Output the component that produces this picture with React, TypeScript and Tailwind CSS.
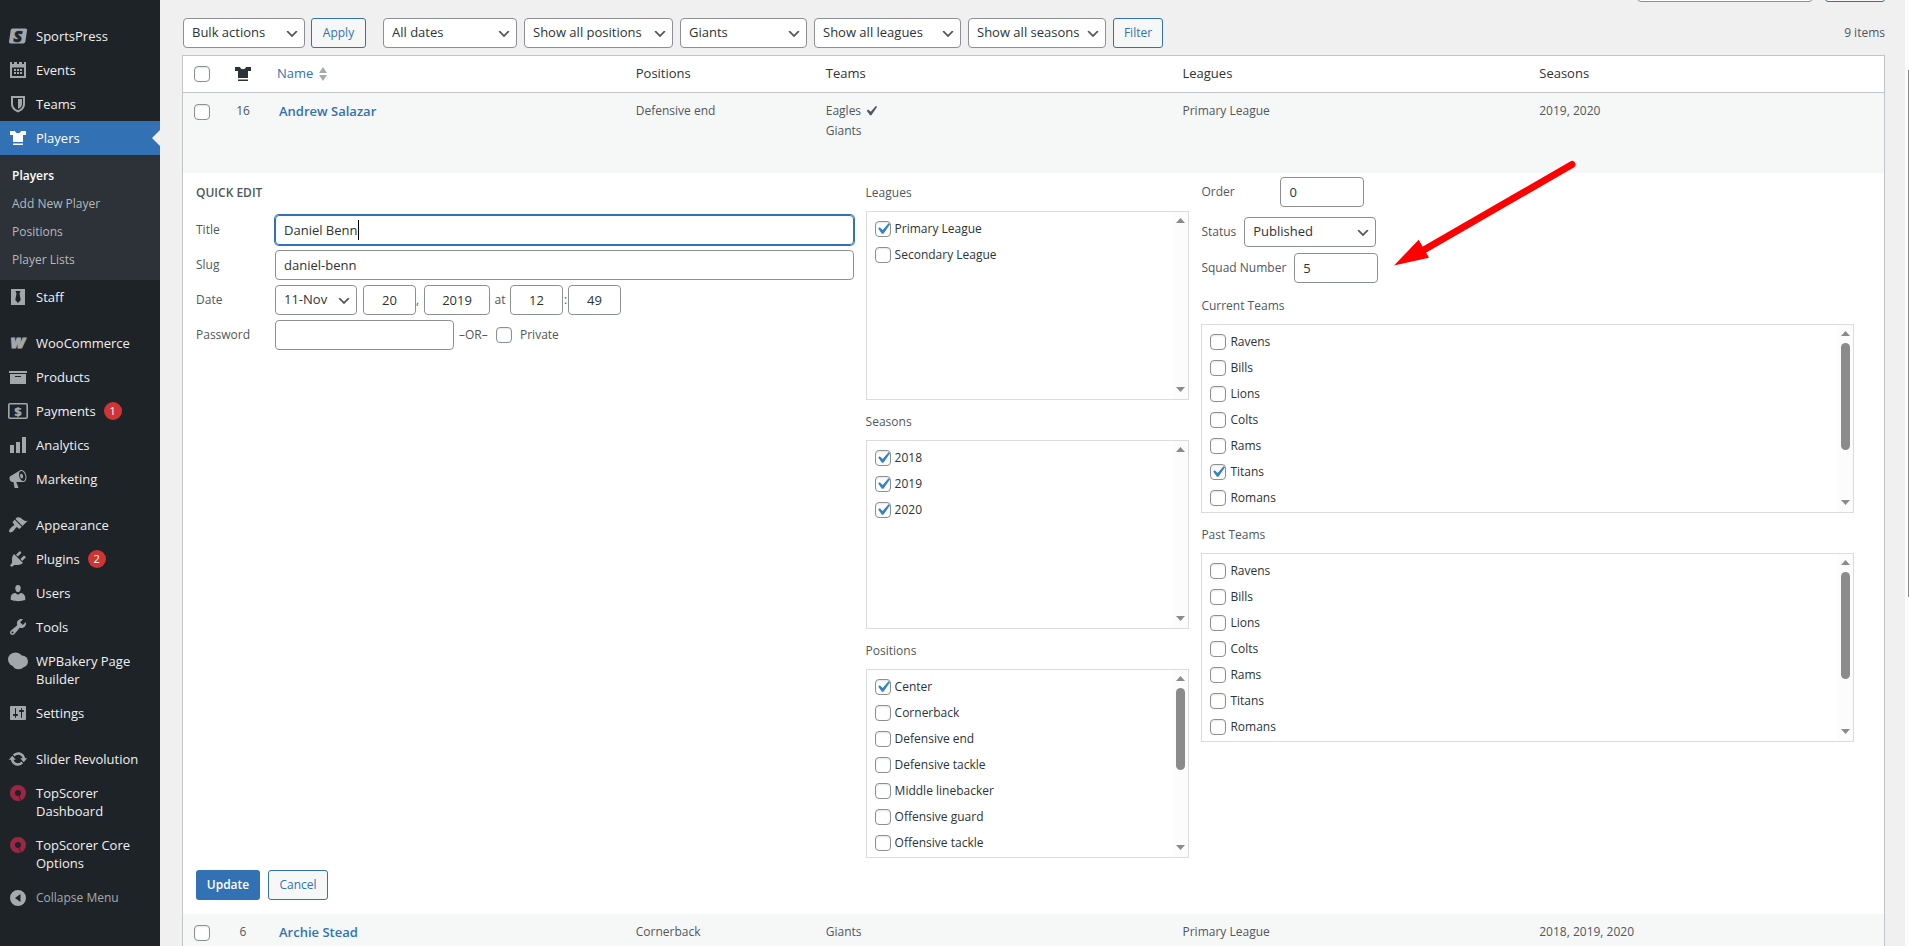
import type { ReactNode } from 'react';

interface MenuItem {
  label: string;
  icon: ReactNode;
  badge?: number;
  active?: boolean;
  separated?: boolean;
}

function Dash({ d }: { d: string }) {
  return (
    <svg viewBox="0 0 20 20" className="w-5 h-5 shrink-0" fill="currentColor" aria-hidden="true">
      <path fillRule="evenodd" d={d} />
    </svg>
  );
}

const SHIRT = 'M2 3h5c.5 1.6 1.6 2.2 3 2.2S12.500 4.600 13 3h5v4h-3v7H5V7H2zM5 15.500h10V17H5z';
const TICK = 'M14.83 4.89l1.34.94-5.81 8.38H9.02L5.780 9.670l1.340-1.250 2.570 2.400z';

const SportsPressIcon = (
  <svg viewBox="0 0 20 20" className="w-5 h-5 shrink-0" aria-hidden="true">
    <path d="M4.500 2.500h13q1.900 0 1.600 1.700l-1.800 11.600q-.3 1.700-2 1.700H2.500Q.8 17.500 1 15.800L2.700 4.200Q3 2.500 4.500 2.500z" fill="currentColor" />
    <text x="10" y="16" textAnchor="middle" fontFamily="Open Sans" fontWeight="800" fontStyle="italic" fontSize="16" fill="#1e2327" stroke="#1e2327" strokeWidth="0.6">S</text>
  </svg>
);

const WooIcon = (
  <svg viewBox="0 0 20 20" className="w-5 h-5 shrink-0 overflow-visible" aria-hidden="true">
    <text x="10" y="15" textAnchor="middle" fontFamily="Open Sans" fontWeight="800" fontStyle="italic" fontSize="18" fill="currentColor" stroke="currentColor" strokeWidth="0.8">w</text>
  </svg>
);

const PaymentsIcon = (
  <svg viewBox="0 0 20 20" className="w-5 h-5 shrink-0" aria-hidden="true">
    <rect x="0.8" y="2.800" width="18.400" height="14.400" rx="1" fill="none" stroke="currentColor" strokeWidth="1.600" />
    <text x="10" y="14.500" textAnchor="middle" fontFamily="Open Sans" fontWeight="800" fontSize="13" fill="currentColor">$</text>
  </svg>
);

const BakeryIcon = (
  <svg viewBox="0 0 20 20" className="w-5 h-5 shrink-0" fill="currentColor" aria-hidden="true">
    <ellipse cx="7.500" cy="8.500" rx="7.500" ry="7" />
    <ellipse cx="14" cy="10.500" rx="6" ry="6" />
    <ellipse cx="10.500" cy="13.500" rx="6" ry="4.800" />
  </svg>
);

const ScorerIcon = (
  <svg viewBox="0 0 20 20" className="w-5 h-5 shrink-0" aria-hidden="true">
    <circle cx="10" cy="10" r="5.500" fill="none" stroke="#9b2743" strokeWidth="5" />
    <path d="M11 12.500l1.500 5" stroke="#1e2327" strokeWidth="0.8" />
  </svg>
);

const MENU: MenuItem[] = [
  { label: 'SportsPress', icon: SportsPressIcon },
  {
    label: 'Events',
    icon: <Dash d="M2 2h2v2h2V2h3v2h2V2h3v2h2V2h2v16H2zM4 7.500V16h12V7.500zM6 9h2v2H6zm3 0h2v2H9zm3 0h2v2h-2zM6 12h2v2H6zm3 0h2v2H9zm3 0h2v2h-2z" />,
  },
  { label: 'Teams', icon: <Dash d="M3 2h14v8c0 4-3 7-7 8.500C6 17 3 14 3 10zM5 4v6c0 3 2 5 5 6.300C13 15 15 13 15 10V4zM10 5h4v5c0 2.200-1.500 4-4 5z" /> },
  { label: 'Players', icon: <Dash d={SHIRT} />, active: true },
  { label: 'Staff', icon: <Dash d="M3 2h14v16H3zM7.500 4l1 2.500L7.300 13 10 16l2.700-3L11.500 6.500l1-2.500z" /> },
  { label: 'WooCommerce', icon: WooIcon, separated: true },
  { label: 'Products', icon: <Dash d="M19 4v2H1V4h18zM2 7h16v10H2V7zm11 3V9H7v1h6z" /> },
  { label: 'Payments', icon: PaymentsIcon, badge: 1 },
  { label: 'Analytics', icon: <Dash d="M18 18V2h-4v16h4zm-6 0V7H8v11h4zm-6 0v-8H2v8h4z" /> },
  {
    label: 'Marketing',
    icon: <Dash d="M18.150 5.940c.46 1.620.38 3.220-.02 4.480-.42 1.280-1.260 2.180-2.300 2.480-.16.06-.26.06-.4.06-.06.02-.12.02-.18.02-.06.02-.14.02-.22.02h-6.800l2.220 5.500c.02.14-.06.26-.14.34-.08.1-.24.16-.34.16H6.950c-.1 0-.26-.06-.34-.16-.08-.08-.16-.2-.14-.34l-1-5.500H4.250l-.02-.02c-.5.06-1.080-.18-1.540-.62s-.88-1.080-1.060-1.880c-.24-.8-.2-1.560-.02-2.200.18-.62.58-1.080 1.060-1.300l.02-.02 9-5.400c.1-.06.18-.1.24-.16.06-.04.14-.08.24-.12.16-.08.28-.12.5-.18 1.040-.3 2.240.1 3.220.98s1.840 2.240 2.260 3.860zm-2.580 5.980h-.02c.4-.1.74-.34 1.040-.7.58-.7.86-1.760.86-3.040 0-.64-.1-1.300-.28-1.980-.34-1.360-1.020-2.500-1.780-3.240s-1.680-1.100-2.460-.88c-.82.22-1.400.96-1.700 2-.32 1.040-.28 2.360.06 3.720.38 1.360 1 2.500 1.800 3.240.78.74 1.620 1.100 2.480.88zm-2.540-7.080c.22-.04.42-.02.62.04.38.16.76.48 1.020 1s.42 1.200.42 1.780c0 .3-.04.56-.12.8-.18.48-.44.84-.86.94-.34.1-.8-.06-1.140-.4s-.64-.86-.78-1.500c-.18-.62-.12-1.240.02-1.720s.48-.84.82-.94z" />,
  },
  {
    label: 'Appearance',
    icon: <Dash d="M14.480 11.060L7.410 3.990l1.500-1.500c.5-.56 2.300-.47 3.510.32 1.210.8 1.430 1.280 2.910 2.100 1.180.64 2.450 1.260 4.450.85zm-.71.71L6.700 4.700 4.930 6.470c-.39.39-.39 1.020 0 1.410l1.060 1.060c.39.39.39 1.030 0 1.420-.6.6-1.430 1.110-2.210 1.690-.35.26-.7.53-1.010.84C1.430 14.230.4 16.080 1.400 17.070c.99 1 2.840-.03 4.180-1.360.31-.31.58-.66.85-1.020.57-.78 1.080-1.610 1.690-2.210.39-.39 1.020-.39 1.410 0l1.060 1.060c.39.39 1.020.39 1.410 0z" />,
    separated: true,
  },
  {
    label: 'Plugins',
    icon: <Dash d="M13.110 4.360L9.870 7.600 8 5.730l3.240-3.240c.35-.34 1.050-.2 1.560.32.52.51.66 1.210.31 1.550zm-8 1.770l.91-1.120 9.010 9.010-1.190.84c-.71.71-2.630 1.160-3.820 1.160H6.140L4.900 17.260c-.59.59-1.540.59-2.120 0-.59-.58-.59-1.530 0-2.120l1.240-1.240v-3.880c0-1.130.4-3.190 1.090-3.890zm7.260 3.970l3.240-3.240c.34-.35 1.040-.21 1.550.31.52.51.66 1.210.31 1.550l-3.240 3.250z" />,
    badge: 2,
  },
  {
    label: 'Users',
    icon: <Dash d="M10 9.250c-2.270 0-2.730-3.440-2.730-3.440C7 4.020 7.820 2 9.970 2c2.160 0 2.980 2.020 2.710 3.810 0 0-.41 3.440-2.680 3.440zm0 2.570L12.720 10c2.390 0 4.520 2.330 4.520 4.530v2.490s-3.650 1.130-7.240 1.130c-3.650 0-7.240-1.130-7.240-1.130v-2.490c0-2.250 1.940-4.480 4.470-4.480z" />,
  },
  {
    label: 'Tools',
    icon: <Dash d="M16.680 9.770c-1.340 1.340-3.300 1.670-4.950.99l-5.410 6.520c-.99.99-2.590.99-3.580 0s-.99-2.590 0-3.570l6.520-5.420c-.68-1.650-.35-3.610.99-4.950 1.280-1.280 3.120-1.620 4.720-1.060l-2.890 2.890 2.820 2.820 2.860-2.870c.53 1.580.18 3.390-1.080 4.650zM3.810 16.210c.4.39 1.040.39 1.430 0 .4-.4.4-1.040 0-1.430-.39-.4-1.030-.4-1.430 0-.39.39-.39 1.030 0 1.430z" />,
  },
  { label: 'WPBakery Page Builder', icon: BakeryIcon },
  {
    label: 'Settings',
    icon: <Dash d="M18 16V4c0-.55-.45-1-1-1H3c-.55 0-1 .45-1 1v12c0 .55.45 1 1 1h14c.55 0 1-.45 1-1zM8 11h1c.55 0 1 .45 1 1s-.45 1-1 1H8v1.500c0 .28-.22.5-.5.5s-.5-.22-.5-.5V13H6c-.55 0-1-.45-1-1s.45-1 1-1h1V5.500c0-.28.22-.5.5-.5s.5.22.5.5V11zm5-2h-1c-.55 0-1-.45-1-1s.45-1 1-1h1V5.500c0-.28.22-.5.5-.5s.5.22.5.5V7h1c.55 0 1 .45 1 1s-.45 1-1 1h-1v5.500c0 .28-.22.5-.5.5s-.5-.22-.5-.5V9z" />,
  },
  {
    label: 'Slider Revolution',
    icon: <Dash d="M10.200 3.280c3.530 0 6.430 2.610 6.920 6h2.080l-3.500 4-3.500-4h2.320c-.45-1.970-2.210-3.450-4.320-3.450-1.450 0-2.730.71-3.540 1.780L4.950 5.660C6.230 4.200 8.110 3.280 10.200 3.280zm-.4 13.440c-3.520 0-6.430-2.610-6.920-6H.8l3.500-4c1.170 1.330 2.330 2.670 3.500 4H5.480c.45 1.970 2.210 3.450 4.320 3.450 1.450 0 2.730-.71 3.540-1.780l1.710 1.950c-1.280 1.460-3.150 2.380-5.250 2.380z" />,
    separated: true,
  },
  { label: 'TopScorer Dashboard', icon: ScorerIcon },
  { label: 'TopScorer Core Options', icon: ScorerIcon },
];

const SUBMENU = ['Players', 'Add New Player', 'Positions', 'Player Lists'];

const TEAMS = ['Ravens', 'Bills', 'Lions', 'Colts', 'Rams', 'Titans', 'Romans'];
const POSITIONS = [
  'Center',
  'Cornerback',
  'Defensive end',
  'Defensive tackle',
  'Middle linebacker',
  'Offensive guard',
  'Offensive tackle',
];

const FIELD = 'h-[30px] rounded border border-[#8c8f94] bg-white text-[13px] text-[#2c3338]';
const OUTLINE_BUTTON =
  'h-[30px] rounded-[3px] border border-[#3272b4] bg-[#f6f7f7] text-[12px] text-[#3272b4] cursor-pointer';

function Sidebar() {
  return (
    <nav className="w-40 shrink-0 bg-[#1e2327] pt-[19px] text-[13px] leading-[18px] text-[#f0f0f1]" aria-label="Main menu">
      <ul>
        {MENU.map((item) => (
          <li key={item.label} className={item.separated ? 'mt-3' : ''}>
            <a
              href="#"
              className={`relative flex items-start gap-2 pl-2 pr-1 py-2 ${item.active ? 'bg-[#3272b4] text-white' : ''}`}
            >
              <span className={`h-[18px] flex items-center ${item.active ? 'text-white' : 'text-[#a2a7ac]'}`}>
                {item.icon}
              </span>
              <span className="max-w-[112px]">{item.label}</span>
              {item.badge && (
                <span className="w-[18px] h-[18px] rounded-full bg-[#d03535] text-center text-[11px] text-white">
                  {item.badge}
                </span>
              )}
              {item.active && (
                <span className="absolute right-0 top-[9px] border-y-8 border-r-8 border-y-transparent border-r-[#f0f0f1]" />
              )}
            </a>
            {item.active && (
              <ul className="bg-[#2d3239] pt-[7px] pb-[6px] text-[12px] leading-7 text-[#b4b9be]">
                {SUBMENU.map((label, i) => (
                  <li key={label}>
                    <a href="#" className={`block px-3 ${i === 0 ? 'font-semibold text-white' : ''}`}>
                      {label}
                    </a>
                  </li>
                ))}
              </ul>
            )}
          </li>
        ))}
      </ul>
      <button type="button" className="flex items-center gap-2 pl-2 py-2 text-[12px] text-[#a7aaad] cursor-pointer">
        <Dash d="M10 2a8 8 0 1 1 0 16a8 8 0 1 1 0-16zM12.500 6L7 10l5.500 4z" />
        Collapse Menu
      </button>
    </nav>
  );
}

function Select({ label, value, width, id }: { label: string; value: string; width: string; id?: string }) {
  return (
    <span className={`relative inline-block ${width}`}>
      <select id={id} aria-label={label} className={`${FIELD} w-full appearance-none pl-2 pr-5`}>
        <option>{value}</option>
      </select>
      <svg
        viewBox="0 0 20 20"
        className="absolute right-[5px] top-2 w-4 h-4 pointer-events-none"
        fill="#555"
        aria-hidden="true"
      >
        <path d="M5 6l5 5 5-5 2 1-7 7-7-7 2-1z" />
      </svg>
    </span>
  );
}

function Checkbox({ checked, label }: { checked?: boolean; label?: string }) {
  return (
    <span className="relative block w-4 h-4 shrink-0">
      <input
        type="checkbox"
        defaultChecked={checked}
        aria-label={label}
        className="peer block w-4 h-4 appearance-none rounded border border-[#8c8f94] bg-white shadow-[inset_0_1px_2px_rgba(0,0,0,0.1)]"
      />
      <svg
        viewBox="3 3 14 14"
        className="absolute inset-0 w-4 h-4 hidden peer-checked:block pointer-events-none"
        fill="#3582c4"
        aria-hidden="true"
      >
        <path d={TICK} />
      </svg>
    </span>
  );
}

function ScrollBar({ thumb }: { thumb?: string }) {
  return (
    <div className="w-[15px] shrink-0 bg-[#fcfcfc] flex flex-col items-center pt-[6px] pb-[7px]" aria-hidden="true">
      <svg viewBox="0 0 9 5" className="w-[9px] h-[5px]" fill="#8b8b8b">
        <path d="M0 5L4.500 0 9 5z" />
      </svg>
      <div className="flex-1 pt-[7px]">{thumb && <div className={`w-[9px] rounded-full bg-[#8b8b8b] ${thumb}`} />}</div>
      <svg viewBox="0 0 9 5" className="w-[9px] h-[5px]" fill="#8b8b8b">
        <path d="M0 0L4.500 5 9 0z" />
      </svg>
    </div>
  );
}

interface CheckListProps {
  title: string;
  items: string[];
  checked?: string[];
  thumb?: string;
}

function CheckList({ title, items, checked = [], thumb }: CheckListProps) {
  return (
    <section aria-label={title}>
      <h3 className="leading-5 mb-2">{title}</h3>
      <div className="h-[189px] border border-[#dcdcde] flex">
        <ul className="flex-1 overflow-hidden pl-2 pt-1 text-[#2c3338]">
          {items.map((item) => (
            <li key={item}>
              <label className="h-[26px] flex items-center gap-1">
                <Checkbox checked={checked.includes(item)} />
                {item}
              </label>
            </li>
          ))}
        </ul>
        <ScrollBar thumb={thumb} />
      </div>
    </section>
  );
}

function QuickEdit() {
  return (
    <form className="pt-1 pl-[13px] pr-[30px] pb-[14px]" onSubmit={(e) => e.preventDefault()}>
      <div className="grid grid-cols-[658fr_324fr_653fr] gap-3">
        <div className="pt-[6px]">
          <h2 className="font-semibold leading-5 mb-3">QUICK EDIT</h2>
          <div className="grid grid-cols-[79px_1fr] gap-y-[5px] items-center">
            <label htmlFor="title">Title</label>
            <div className="relative flex">
              <input
                id="title"
                defaultValue="Daniel Benn"
                className="w-full h-[30px] px-2 rounded border border-[#3272b4] text-[13px] text-[#2c3338] shadow-[0_0_0_1px_#3272b4]"
              />
              {/* text caret */}
              <span className="absolute left-[83px] top-[5px] w-px h-5 bg-black" />
            </div>

            <label htmlFor="slug">Slug</label>
            <input id="slug" defaultValue="daniel-benn" className={`${FIELD} w-full px-2`} />

            <label htmlFor="month">Date</label>
            <div className="flex items-center">
              <Select id="month" label="Month" value="11-Nov" width="w-[82px]" />
              <input aria-label="Day" defaultValue="20" className={`${FIELD} w-[53px] ml-[6px] text-center`} />
              <span className="w-2">,</span>
              <input aria-label="Year" defaultValue="2019" className={`${FIELD} w-[66px] text-center`} />
              <span className="w-5 text-center">at</span>
              <input aria-label="Hour" defaultValue="12" className={`${FIELD} w-[53px] text-center`} />
              <span className="w-[5px] text-center">:</span>
              <input aria-label="Minute" defaultValue="49" className={`${FIELD} w-[53px] text-center`} />
            </div>

            <label htmlFor="password">Password</label>
            <div className="flex items-center">
              <input id="password" className={`${FIELD} w-[179px] px-2`} />
              <span className="w-[42px] pl-[5px]">–OR–</span>
              <label className="flex items-center gap-2">
                <Checkbox />
                Private
              </label>
            </div>
          </div>
        </div>

        <div className="pt-[6px] flex flex-col gap-3">
          <CheckList title="Leagues" items={['Primary League', 'Secondary League']} checked={['Primary League']} />
          <CheckList title="Seasons" items={['2018', '2019', '2020']} checked={['2018', '2019', '2020']} />
          <CheckList title="Positions" items={POSITIONS} checked={['Center']} thumb="h-[82px]" />
        </div>

        <div className="relative">
          <div className="flex items-center">
            <label htmlFor="order" className="w-[79px]">Order</label>
            <input id="order" defaultValue="0" className={`${FIELD} w-[84px] px-2`} />
          </div>
          <div className="flex items-center gap-2 mt-[10px]">
            <label htmlFor="status">Status</label>
            <Select id="status" label="Status" value="Published" width="w-[132px]" />
          </div>
          <div className="flex items-center gap-2 mt-[6px] mb-[13px]">
            <label htmlFor="squad">Squad Number</label>
            <input id="squad" defaultValue="5" className={`${FIELD} w-[84px] px-2`} />
          </div>
          <div className="flex flex-col gap-3">
            <CheckList title="Current Teams" items={TEAMS} checked={['Titans']} thumb="h-[107px]" />
            <CheckList title="Past Teams" items={TEAMS} thumb="h-[107px]" />
          </div>

          {/* Pointer to the squad number field */}
          <svg
            viewBox="0 0 190 110"
            className="absolute left-[189px] -top-[17px] w-[190px] h-[110px] pointer-events-none"
            aria-hidden="true"
          >
            <path d="M182 4.500L32 91" stroke="#fe0000" strokeWidth="7" strokeLinecap="round" />
            <path d="M4 105.500L28.700 79.700 39 97.700z" fill="#fe0000" />
          </svg>
        </div>
      </div>

      <div className="flex gap-2 mt-3">
        <button type="submit" className="w-16 h-[30px] rounded-[3px] bg-[#3272b4] text-[12px] font-semibold text-white cursor-pointer">
          Update
        </button>
        <button type="button" className={`${OUTLINE_BUTTON} w-[60px]`}>Cancel</button>
      </div>
    </form>
  );
}

interface PlayerRowProps {
  number: number;
  name: string;
  position: string;
  teams: ReactNode;
  seasons: string;
}

function PlayerRow({ number, name, position, teams, seasons }: PlayerRowProps) {
  return (
    <tr className="h-20 bg-[#f6f7f7] align-top leading-5">
      <th className="pl-[11px] pt-[11px]">
        <Checkbox label={`Select ${name}`} />
      </th>
      <td className="pt-2 text-center">{number}</td>
      <td className="pt-2 pl-3">
        <a href="#" className="text-[13px] font-semibold text-[#3272b4]">{name}</a>
      </td>
      <td className="pt-2 pl-3">{position}</td>
      <td className="pt-2 pl-3">{teams}</td>
      <td className="pt-2 pl-3">Primary League</td>
      <td className="pt-2 pl-3">{seasons}</td>
    </tr>
  );
}

function PlayersTable() {
  return (
    <div className="border border-[#c3c4c7] bg-white mt-[7px]">
      <table className="w-full table-fixed border-separate border-spacing-0 text-left">
        <colgroup>
          <col className="w-9" />
          <col className="w-12" />
          <col />
          <col className="w-[190px]" />
          <col />
          <col />
          <col />
        </colgroup>
        <thead>
          <tr className="h-[37px] text-[13px] text-[#2c3338] *:border-b *:border-[#c3c4c7] *:font-normal">
            <td className="pl-[11px]">
              <Checkbox label="Select all" />
            </td>
            <th>
              <svg viewBox="0 0 20 20" className="w-5 h-5 mx-auto" fill="currentColor" role="img" aria-label="Squad number">
                <path d={SHIRT} />
              </svg>
            </th>
            <th className="pl-[10px]">
              <a href="#" className="flex items-center gap-[6px] text-[#3272b4]">
                Name
                <svg viewBox="0 0 8 14" className="w-2 h-[14px]" fill="#a7aaad" aria-hidden="true">
                  <path d="M4 0l4 6H0zM4 14L0 8h8z" />
                </svg>
              </a>
            </th>
            <th className="pl-3">Positions</th>
            <th className="pl-3">Teams</th>
            <th className="pl-3">Leagues</th>
            <th className="pl-3">Seasons</th>
          </tr>
        </thead>
        <tbody>
          <PlayerRow
            number={16}
            name="Andrew Salazar"
            position="Defensive end"
            teams={
              <>
                <span className="flex items-center">
                  Eagles
                  <svg viewBox="0 0 20 20" className="w-5 h-5" fill="currentColor" role="img" aria-label="Current team">
                    <path d={TICK} />
                  </svg>
                </span>
                Giants
              </>
            }
            seasons="2019, 2020"
          />
          <tr>
            <td colSpan={7}>
              <QuickEdit />
            </td>
          </tr>
          <PlayerRow number={6} name="Archie Stead" position="Cornerback" teams="Giants" seasons="2018, 2019, 2020" />
        </tbody>
      </table>
    </div>
  );
}

export default function App() {
  return (
    <div className="h-screen flex overflow-hidden bg-[#f0f0f1] font-['Open_Sans',sans-serif] text-[12px] text-[#50575e]">
      <Sidebar />
      <main className="flex-1 min-w-0 pl-[22px] pr-5">
        {/* Only the lower edge of the search row is scrolled into view */}
        <div className="h-[2px] overflow-hidden flex items-end justify-end gap-3">
          <input type="search" aria-label="Search Players" className={`${FIELD} w-44 shrink-0`} />
          <button type="button" aria-label="Search" className={`${OUTLINE_BUTTON} w-[60px] shrink-0`} />
        </div>
        <div className="flex items-center mt-4 pl-px">
          <div className="flex gap-[6px] mr-[17px]">
            <Select label="Bulk actions" value="Bulk actions" width="w-[122px]" />
            <button type="button" className={`${OUTLINE_BUTTON} w-[55px]`}>Apply</button>
          </div>
          <div className="flex gap-[7px]">
            <Select label="Date" value="All dates" width="w-[134px]" />
            <Select label="Position" value="Show all positions" width="w-[149px]" />
            <Select label="Team" value="Giants" width="w-[127px]" />
            <Select label="League" value="Show all leagues" width="w-[147px]" />
            <Select label="Season" value="Show all seasons" width="w-[138px]" />
            <button type="button" className={`${OUTLINE_BUTTON} w-[50px]`}>Filter</button>
          </div>
          <span className="ml-auto">9 items</span>
        </div>
        <PlayersTable />
      </main>
      <div className="w-1 shrink-0 bg-[#fcfcfc] pt-[70px]" aria-hidden="true">
        <div className="ml-auto w-px h-[527px] bg-[#8b8b8b]" />
      </div>
    </div>
  );
}
